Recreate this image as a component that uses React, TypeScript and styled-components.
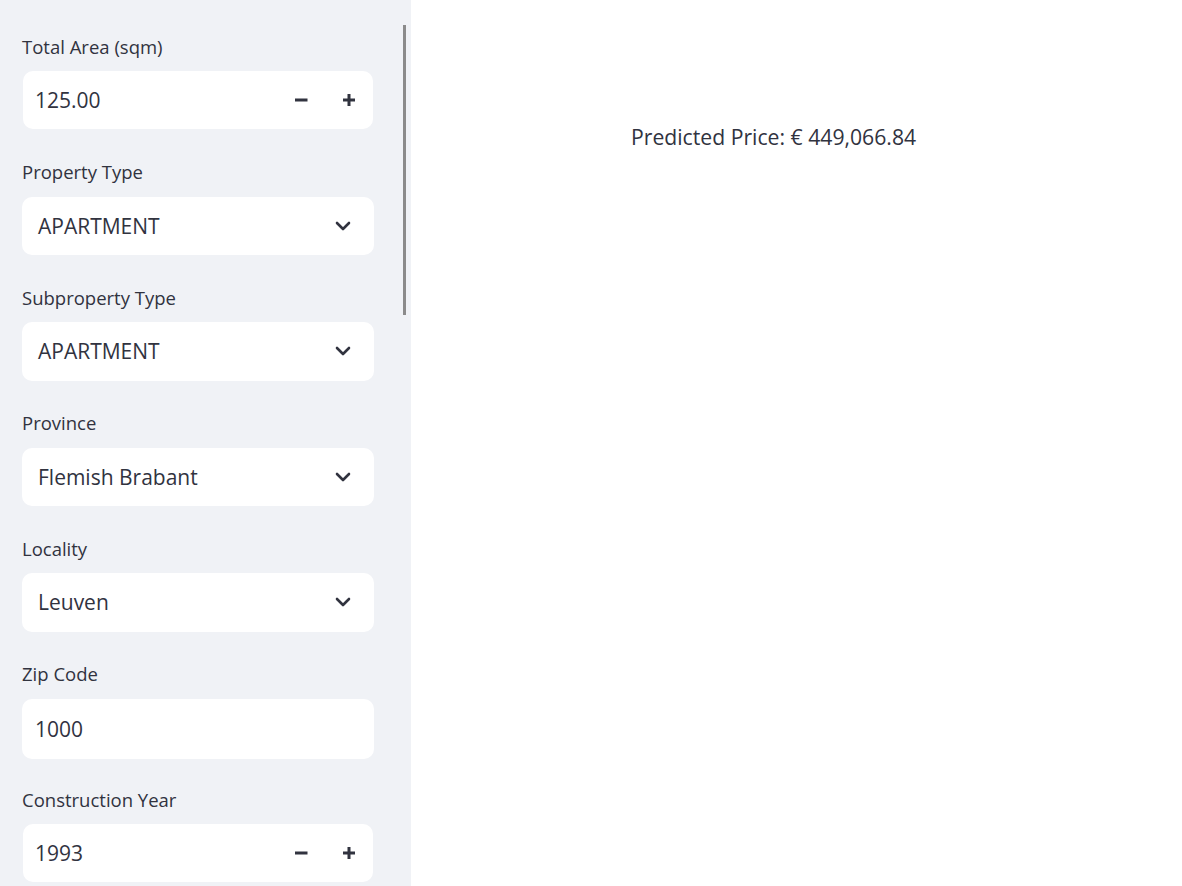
import React from "react";
import styled, { createGlobalStyle } from "styled-components";

const Global = createGlobalStyle`
  html, body { margin: 0; padding: 0; background: #ffffff; }
  body { font-family: "Open Sans", "Liberation Sans", sans-serif; color: #31333f; }
  * { box-sizing: border-box; }
`;

const Page = styled.div`
  display: flex;
  width: 1182px;
  height: 886px;
  overflow: hidden;
`;

const Sidebar = styled.aside`
  position: relative;
  width: 411px;
  flex: none;
  height: 886px;
  background: #f0f2f6;
  padding: 33.5px 37px 0 22px;
  display: flex;
  flex-direction: column;
`;

const ScrollThumb = styled.div`
  position: absolute;
  left: 403px;
  top: 25px;
  width: 3px;
  height: 290px;
  background: #8b8b8b;
`;

const Field = styled.div`
  display: flex;
  flex-direction: column;
  gap: 12.5px;
  height: 125.5px;
  flex: none;
`;

const Label = styled.div`
  font-size: 18.5px;
  line-height: 25px;
  height: 25px;
  color: #31333f;
`;

const Box = styled.div<{ $kind: "number" | "select" | "text" }>`
  flex: none;
  background: #ffffff;
  border-radius: 10px;
  display: flex;
  align-items: center;
  height: ${(p) => (p.$kind === "number" ? "57.5px" : p.$kind === "text" ? "60px" : "58.5px")};
  width: ${(p) => (p.$kind === "number" ? "350px" : "352px")};
  margin-left: ${(p) => (p.$kind === "number" ? "1px" : "0")};
  padding: ${(p) =>
    p.$kind === "number" ? "0 0 0 12px" : p.$kind === "text" ? "0 13px" : "0 23px 0 16px"};
`;

const Value = styled.div`
  flex: 1;
  font-size: 21px;
  color: #31333f;
  white-space: nowrap;
`;

const Steps = styled.div`
  display: flex;
`;

const StepBtn = styled.div`
  width: 48px;
  height: 44px;
  display: flex;
  align-items: center;
  justify-content: center;
`;

const Main = styled.main`
  flex: 1;
  padding: 122px 0 0 220px;
`;

const Result = styled.div`
  font-size: 21.2px;
  line-height: 30px;
  color: #31333f;
`;

const Minus = () => (
  <svg width="14" height="14" viewBox="0 0 14 14">
    <rect x="1" y="5.5" width="12.5" height="3" fill="#31333f" />
  </svg>
);

const Plus = () => (
  <svg width="14" height="14" viewBox="0 0 14 14">
    <rect x="1" y="5.5" width="12" height="3" fill="#31333f" />
    <rect x="5.5" y="1" width="3" height="12" fill="#31333f" />
  </svg>
);

const Chevron = () => (
  <svg width="16" height="16" viewBox="0 0 16 16">
    <path
      d="M2 5 L8 11 L14 5"
      fill="none"
      stroke="#31333f"
      strokeWidth="2.6"
      strokeLinecap="round"
      strokeLinejoin="round"
    />
  </svg>
);

const NumberField = ({ label, value }: { label: string; value: string }) => (
  <Field>
    <Label>{label}</Label>
    <Box $kind="number">
      <Value>{value}</Value>
      <Steps>
        <StepBtn>
          <Minus />
        </StepBtn>
        <StepBtn>
          <Plus />
        </StepBtn>
      </Steps>
    </Box>
  </Field>
);

const SelectField = ({ label, value }: { label: string; value: string }) => (
  <Field>
    <Label>{label}</Label>
    <Box $kind="select">
      <Value>{value}</Value>
      <Chevron />
    </Box>
  </Field>
);

const TextField = ({ label, value }: { label: string; value: string }) => (
  <Field>
    <Label>{label}</Label>
    <Box $kind="text">
      <Value>{value}</Value>
    </Box>
  </Field>
);

export default function App() {
  return (
    <>
      <Global />
      <Page>
        <Sidebar>
          <NumberField label="Total Area (sqm)" value="125.00" />
          <SelectField label="Property Type" value="APARTMENT" />
          <SelectField label="Subproperty Type" value="APARTMENT" />
          <SelectField label="Province" value="Flemish Brabant" />
          <SelectField label="Locality" value="Leuven" />
          <TextField label="Zip Code" value="1000" />
          <NumberField label="Construction Year" value="1993" />
          <ScrollThumb />
        </Sidebar>
        <Main>
          <Result>Predicted Price: € 449,066.84</Result>
        </Main>
      </Page>
    </>
  );
}
